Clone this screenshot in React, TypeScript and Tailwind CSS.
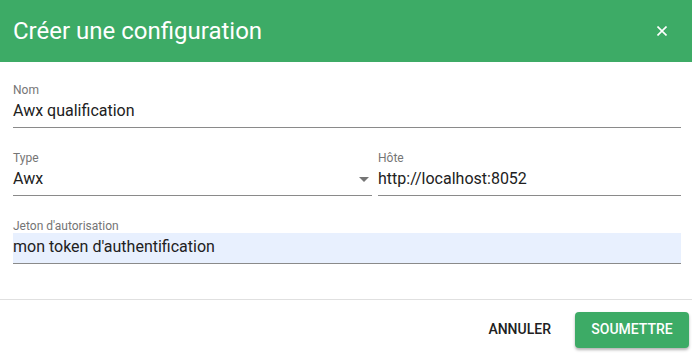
import React from 'react';

const font = { fontFamily: 'Roboto, "Liberation Sans", sans-serif' };

// Champ texte style Material
const Field: React.FC<{ label: string; value: string; filled?: boolean; select?: boolean }> = ({
  label,
  value,
  filled,
  select,
}) => (
  <div className="flex flex-col">
    <span className="text-[12px] leading-[14px] text-[#757575]">{label}</span>
    <div
      className={`relative h-[31px] pb-[2px] flex items-center border-b border-[#8a8a8a] text-[16px] text-[#212121] ${
        filled ? 'bg-[#e8f0fe]' : ''
      }`}
    >
      <span>{value}</span>
      {select && (
        <svg className="absolute right-[3px] top-[12px]" width="10" height="5" viewBox="0 0 10 5">
          <path d="M0 0 L10 0 L5 5 Z" fill="#757575" />
        </svg>
      )}
    </div>
  </div>
);

const App: React.FC = () => {
  return (
    <div className="w-[692px] h-[359px] bg-white flex flex-col" style={font}>
      {/* entête */}
      <div className="h-[62px] bg-[#3dab66] flex items-center justify-between pl-[13px] pr-[25px] shrink-0">
        <span className="text-white text-[24px] font-normal">Créer une configuration</span>
        <svg width="10" height="10" viewBox="0 0 10 10">
          <path d="M0.5 0.5 L9.5 9.5 M9.5 0.5 L0.5 9.5" stroke="white" strokeWidth="1.6" />
        </svg>
      </div>

      {/* formulaire */}
      <div className="flex flex-col pl-[13px] pr-[11px] pt-[21px] gap-[23px] h-[237px]">
        <Field label="Nom" value="Awx qualification" />
        <div className="grid grid-cols-[359px_1fr] gap-[6px]">
          <Field label="Type" value="Awx" select />
          <Field label="Hôte" value="http://localhost:8052" />
        </div>
        <Field label="Jeton d'autorisation" value="mon token d'authentification" filled />
      </div>

      {/* pied */}
      <div className="border-t border-[#e0e0e0] flex-1 flex items-center justify-end pr-[3px] gap-[16px]">
        <button className="h-[36px] px-[8px] text-[14px] font-medium text-[#212121] uppercase">Annuler</button>
        <button className="h-[36px] w-[114px] rounded-[4px] bg-[#3dab66] text-white text-[14px] font-medium uppercase shadow-[0_2px_3px_rgba(0,0,0,0.3)]">
          Soumettre
        </button>
      </div>
    </div>
  );
};

export default App;
